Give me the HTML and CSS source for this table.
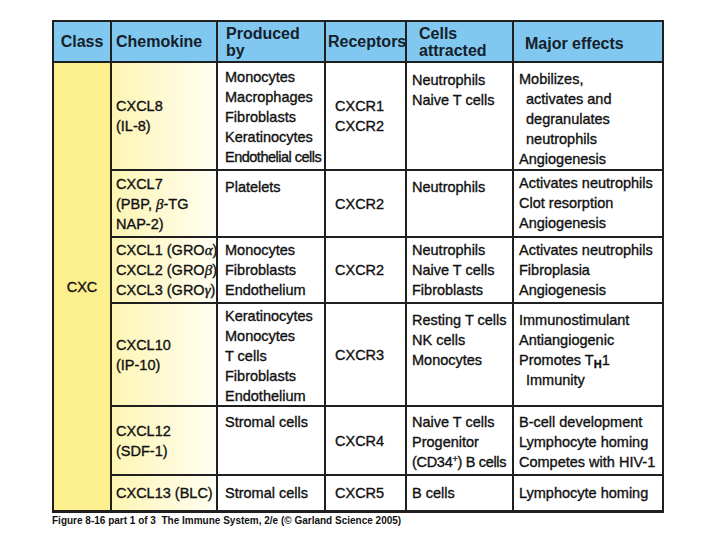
FILE: index.html
```html
<!DOCTYPE html>
<html>
<head>
<meta charset="utf-8">
<link rel="stylesheet" href="styles.css">
</head>
<body>
<div class="page">
  <div class="tbl">
    <div class="h hc1">Class</div>
    <div class="h hc2">Chemokine</div>
    <div class="h hc3 two">Produced<br>by</div>
    <div class="h hc4">Receptors</div>
    <div class="h hc5 two">Cells<br>attracted</div>
    <div class="h hc6">Major effects</div>

    <div class="cls">CXC</div>

    <!-- row 1 -->
    <div class="cell chem mid"><span>CXCL8</span><span>(IL-8)</span></div>
    <div class="cell prod p4"><span>Monocytes</span><span>Macrophages</span><span>Fibroblasts</span><span>Keratinocytes</span><span class="tight">Endothelial cells</span></div>
    <div class="cell rec mid"><span>CXCR1</span><span>CXCR2</span></div>
    <div class="cell att p7"><span>Neutrophils</span><span>Naive T cells</span></div>
    <div class="cell eff p6"><span>Mobilizes,</span><span class="ind">activates and</span><span class="ind">degranulates</span><span class="ind">neutrophils</span><span>Angiogenesis</span></div>

    <!-- row 2 -->
    <div class="cell chem p3"><span>CXCL7</span><span>(PBP, <i class="gr">β</i>-TG</span><span>NAP-2)</span></div>
    <div class="cell prod p6"><span>Platelets</span></div>
    <div class="cell rec mid"><span>CXCR2</span></div>
    <div class="cell att p6"><span>Neutrophils</span></div>
    <div class="cell eff p2"><span>Activates neutrophils</span><span>Clot resorption</span><span>Angiogenesis</span></div>

    <!-- row 3 -->
    <div class="cell chem p2"><span>CXCL1 (GRO<i class="gr">α</i>)</span><span>CXCL2 (GRO<i class="gr">β</i>)</span><span>CXCL3 (GRO<i class="gr">γ</i>)</span></div>
    <div class="cell prod p2"><span>Monocytes</span><span>Fibroblasts</span><span>Endothelium</span></div>
    <div class="cell rec mid"><span>CXCR2</span></div>
    <div class="cell att p2"><span>Neutrophils</span><span>Naive T cells</span><span>Fibroblasts</span></div>
    <div class="cell eff p2"><span>Activates neutrophils</span><span>Fibroplasia</span><span>Angiogenesis</span></div>

    <!-- row 4 -->
    <div class="cell chem mid"><span>CXCL10</span><span>(IP-10)</span></div>
    <div class="cell prod p2"><span>Keratinocytes</span><span>Monocytes</span><span>T cells</span><span>Fibroblasts</span><span>Endothelium</span></div>
    <div class="cell rec mid"><span>CXCR3</span></div>
    <div class="cell att p6"><span>Resting T cells</span><span>NK cells</span><span>Monocytes</span></div>
    <div class="cell eff p6"><span>Immunostimulant</span><span>Antiangiogenic</span><span>Promotes T<sub class="sb">H</sub>1</span><span class="ind">Immunity</span></div>

    <!-- row 5 -->
    <div class="cell chem mid"><span>CXCL12</span><span>(SDF-1)</span></div>
    <div class="cell prod p5"><span>Stromal cells</span></div>
    <div class="cell rec mid"><span>CXCR4</span></div>
    <div class="cell att p5"><span>Naive T cells</span><span>Progenitor</span><span class="tight2">(CD34<sup class="sp">+</sup>) B cells</span></div>
    <div class="cell eff p5"><span>B-cell development</span><span>Lymphocyte homing</span><span>Competes with HIV-1</span></div>

    <!-- row 6 -->
    <div class="cell chem mid"><span>CXCL13 (BLC)</span></div>
    <div class="cell prod mid"><span>Stromal cells</span></div>
    <div class="cell rec mid"><span>CXCR5</span></div>
    <div class="cell att mid"><span>B cells</span></div>
    <div class="cell eff mid"><span>Lymphocyte homing</span></div>
  </div>
  <div class="caption">Figure 8-16 part 1 of 3&nbsp; The Immune System, 2/e (© Garland Science 2005)</div>
</div>
</body>
</html>
```
FILE: styles.css
```css
html, body {
  margin: 0;
  padding: 0;
  background: #ffffff;
}

.page {
  padding: 20px 0 0 52px;
  font-family: "Liberation Sans", Arial, sans-serif;
}

.tbl {
  display: grid;
  grid-template-columns: 56px 104px 106px 79px 105px 148px;
  grid-template-rows: 39px 106px 65px 64px 101px 67px 34px;
  gap: 2px;
  padding: 2px 2px 3px 2px;
  background: #1f1f1f;
  width: max-content;
}

.h {
  background: #80c8ef;
  color: #15202b;
  font-weight: bold;
  font-size: 16px;
  line-height: 17px;
  display: flex;
  align-items: center;
}

.hc1 { justify-content: center; }
.hc2 { padding-left: 4px; }
.hc3 { padding-left: 8px; }
.hc4 { padding-left: 2px; }
.hc5 { padding-left: 12px; }
.hc6 { padding-left: 11px; padding-top: 3px; }

.cls {
  grid-column: 1;
  grid-row: 2 / span 6;
  background: #fcef8e;
  display: flex;
  align-items: center;
  justify-content: center;
  font-size: 14.5px;
  color: #111;
  -webkit-text-stroke: 0.35px #111;
}

.cell {
  background: #ffffff;
  display: flex;
  flex-direction: column;
  justify-content: flex-start;
  font-size: 14.5px;
  line-height: 20px;
  color: #111;
  -webkit-text-stroke: 0.35px #111;
  white-space: nowrap;
  overflow: hidden;
}

.cell.mid { justify-content: center; }

.chem {
  background: linear-gradient(to right, #fdf5b4, #fffef2);
  padding-left: 4px;
}
.prod { padding-left: 7px; }
.rec { padding-left: 9px; }
.att { padding-left: 5px; }
.eff { padding-left: 5px; }

.p2 { padding-top: 2px; }
.p3 { padding-top: 3px; }
.p4 { padding-top: 4px; }
.p5 { padding-top: 5px; }
.p6 { padding-top: 6px; }
.p7 { padding-top: 7px; }

.ind { padding-left: 7px; }
.tight { letter-spacing: -0.5px; }
.tight2 { letter-spacing: -0.3px; }

.gr {
  font-family: "Liberation Serif", "Times New Roman", serif;
  font-style: italic;
  font-size: 15px;
}

.sb {
  font-size: 11px;
  vertical-align: -3px;
  line-height: 0;
  font-weight: bold;
}

.sp {
  font-size: 9px;
  vertical-align: 5px;
  line-height: 0;
}

.caption {
  margin-top: 2px;
  font-size: 10px;
  line-height: 12px;
  font-weight: bold;
  color: #111;
  letter-spacing: 0;
  white-space: nowrap;
}
```
